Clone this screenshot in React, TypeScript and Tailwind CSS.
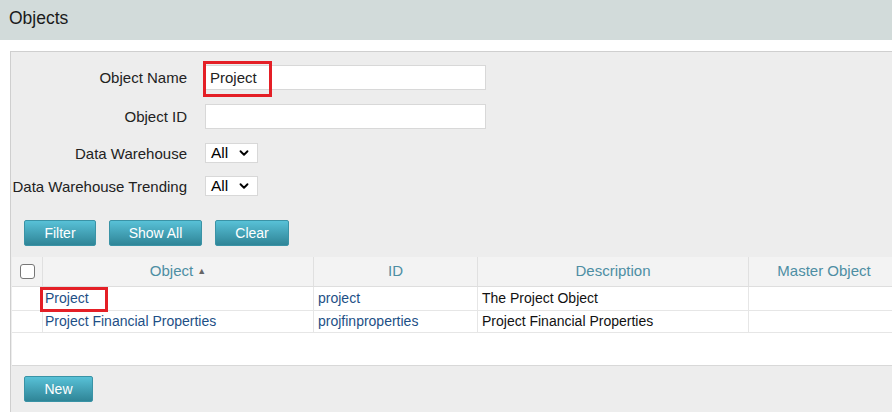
import { ChevronDown } from 'lucide-react';

const btn =
    'h-[26px] rounded-[2px] border border-[#3a93a6] bg-gradient-to-b from-[#58c1d7] to-[#2f8597] text-white text-[14px] leading-none';

const rows = [
    { name: 'Project', id: 'project', desc: 'The Project Object', mark: true },
    { name: 'Project Financial Properties', id: 'projfinproperties', desc: 'Project Financial Properties', mark: false },
];

export default function App() {
    return (
        <div className="w-[892px] h-[412px] overflow-hidden bg-white font-['Liberation_Sans',Arial,sans-serif] text-[15px] text-[#222]">
            {/* Header */}
            <div className="h-[40px] bg-[#d2dbda] pl-[9px] flex items-center">
                <h1 className="text-[17.5px] text-[#1a1a1a] -mt-[4px]">Objects</h1>
            </div>

            {/* Panel */}
            <div className="mt-[11px] ml-[10px] w-[900px] h-[361px] border-l border-t border-[#cfcfcf] bg-[#ededed] flex flex-col">
                {/* Form */}
                <div className="pt-[13px] flex flex-col">
                    <div className="flex items-center h-[25px]">
                        <label className="w-[176px] text-right pt-[2px]">Object Name</label>
                        <div className="relative ml-[18px]">
                            <input
                                className="w-[281px] h-[25px] bg-white border border-[#d8d8d8] px-[4px] outline-none"
                                defaultValue="Project"
                            />
                            <div className="absolute left-[-2px] top-[-4px] w-[69px] h-[36px] border-[3px] border-[#e41f26] pointer-events-none" />
                        </div>
                    </div>
                    <div className="flex items-center h-[25px] mt-[14px]">
                        <label className="w-[176px] text-right pt-[2px]">Object ID</label>
                        <input className="ml-[18px] w-[281px] h-[25px] bg-white border border-[#d8d8d8] outline-none" />
                    </div>
                    <div className="flex items-center h-[20px] mt-[14px]">
                        <label className="w-[176px] text-right pt-[3px]">Data Warehouse</label>
                        <Select />
                    </div>
                    <div className="flex items-center h-[20px] mt-[13px]">
                        <label className="w-[176px] text-right whitespace-nowrap pt-[3px]">Data Warehouse Trending</label>
                        <Select />
                    </div>
                </div>

                {/* Buttons */}
                <div className="flex gap-[13px] pl-[13px] mt-[24px]">
                    <button className={`${btn} w-[72px]`}>Filter</button>
                    <button className={`${btn} w-[93px]`}>Show All</button>
                    <button className={`${btn} w-[74px]`}>Clear</button>
                </div>

                {/* Table */}
                <div className="mt-[11px] ml-[1px] bg-white h-[109px] border-b border-[#d8d8d8] text-[14px]">
                    <div className="flex h-[30px] bg-[#f3f3f3] border-b border-[#dedede] text-[#4d8ea3] text-[15px]">
                        <div className="w-[31px] flex items-center justify-center border-r border-[#e0e0e0]">
                            <div className="w-[15px] h-[15px] border border-[#777] rounded-[3px] bg-white" />
                        </div>
                        <div className="w-[271px] flex items-center justify-center border-r border-[#e0e0e0]">
                            Object
                            <span className="ml-[4px] text-[9px] text-[#666]">▲</span>
                        </div>
                        <div className="w-[164px] flex items-center justify-center border-r border-[#e0e0e0]">ID</div>
                        <div className="w-[271px] flex items-center justify-center border-r border-[#e0e0e0]">Description</div>
                        <div className="w-[150px] flex items-center justify-center">Master Object</div>
                    </div>
                    {rows.map((r, i) => (
                        <div key={r.id} className={`flex border-b border-[#e6e6e6] ${i === 0 ? 'h-[24px]' : 'h-[22px]'}`}>
                            <div className="w-[31px] border-r border-[#e6e6e6]" />
                            <div className="w-[271px] border-r border-[#e6e6e6] pl-[2px] flex items-center text-[#1d4f86] relative">
                                {r.name}
                                {r.mark && (
                                    <div className="absolute left-[-3px] top-[0px] w-[68px] h-[25px] border-[3px] border-[#e41f26] pointer-events-none" />
                                )}
                            </div>
                            <div className="w-[164px] border-r border-[#e6e6e6] pl-[4px] flex items-center text-[#1d4f86]">{r.id}</div>
                            <div className="w-[271px] border-r border-[#e6e6e6] pl-[4px] flex items-center text-[#111]">{r.desc}</div>
                            <div className="w-[150px]" />
                        </div>
                    ))}
                </div>

                {/* Footer */}
                <div className="pl-[13px] pt-[10px]">
                    <button className={`${btn} w-[69px]`}>New</button>
                </div>
            </div>
        </div>
    );
}

function Select() {
    return (
        <div className="ml-[18px] w-[53px] h-[20px] bg-white border border-[#d8d8d8] flex items-center justify-between pl-[5px] pr-[6px] text-[15.5px] text-black">
            <span>All</span>
            <ChevronDown size={14} strokeWidth={3.2} />
        </div>
    );
}
